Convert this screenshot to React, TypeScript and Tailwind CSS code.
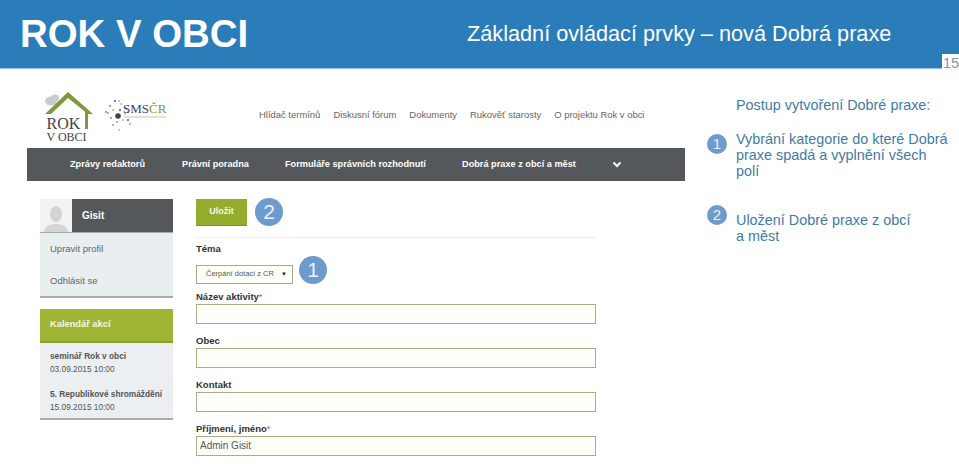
import React from "react";

const ar = "font-['Liberation_Sans',Arial,sans-serif]";

function Badge({ n, className = "" }: { n: string; className?: string }) {
  return (
    <span className={`flex items-center justify-center rounded-full bg-[#6e9bcd] text-[#eaf1f8] shrink-0 ${className}`}>
      {n}
    </span>
  );
}

function Field({ label, req, value, mt }: { label: string; req?: boolean; value?: string; mt: string }) {
  return (
    <div className={mt}>
      <div className="h-[14px] text-[9.5px] leading-[14px] font-bold text-[#333]">
        {label}
        {req && <span className="text-[#b85c5c] font-normal">*</span>}
      </div>
      <div className="h-[20px] w-[400px] border border-[#a9ae85] bg-[#fffff9] pl-[3px] text-[10px] leading-[18px] text-[#555]">
        {value}
      </div>
    </div>
  );
}

function RokLogo() {
  return (
    <svg width="52" height="56" viewBox="0 0 52 56" className="shrink-0">
      <ellipse cx="7" cy="11" rx="6" ry="4.5" fill="#c9cbcc" />
      <ellipse cx="11" cy="8" rx="4" ry="3.5" fill="#c9cbcc" />
      <path d="M1 24 L24 2 L49 24 L44 24 L24 8 L7 24 Z" fill="#7c9a3a" />
      <rect x="41" y="20" width="3" height="19" fill="#7c9a3a" />
      <text x="2.5" y="39" fontFamily="Liberation Serif, serif" fontSize="16" fill="#444">ROK</text>
      <text x="2.5" y="51" fontFamily="Liberation Serif, serif" fontSize="12" fill="#444">V OBCI</text>
    </svg>
  );
}

function SmsLogo() {
  const dots = [
    [10, 3], [16, 6], [20, 10], [5, 8], [3, 15], [8, 12], [15, 12], [20, 16], [23, 14], [6, 20], [12, 24], [18, 22], [23, 22], [14, 32], [8, 27], [1, 14], [25, 26], [14, 3],
  ];
  return (
    <svg width="66" height="36" viewBox="0 0 66 36" className="shrink-0">
      {dots.map(([x, y], i) => (
        <circle key={i} cx={x} cy={y} r={i % 3 === 0 ? 1 : 0.8} fill={i % 2 ? "#7f9a3c" : "#555"} />
      ))}
      <circle cx="13" cy="18" r="2.8" fill="#444" />
      <text x="18" y="15" fontFamily="Liberation Serif, serif" fontSize="13" fill="#3c3f78">
        SMS<tspan fill="#7c9a3a">ČR</tspan>
      </text>
      <rect x="19" y="18.5" width="42" height="1" fill="#c6c9a0" />
    </svg>
  );
}

export default function App() {
  return (
    <div className={`relative flex h-[464px] w-[959px] flex-col overflow-hidden bg-white ${ar}`}>
      <header className="flex h-[68px] shrink-0 items-center bg-[#2a7db8] shadow-[0_1px_1px_#9fc3dd]">
        <div className="ml-[20px] w-[447px] text-[38.4px] font-bold leading-none text-white">ROK V OBCI</div>
        <div className="text-[21.7px] leading-none text-white">Základní ovládací prvky – nová Dobrá praxe</div>
      </header>
      <div className="absolute right-0 top-[54px] h-[15px] w-[17px] bg-white pl-[1px] text-[14.5px] leading-[19px] text-[#7c97ab]">15</div>

      <div className="flex min-h-0 flex-1">
        <div className="ml-[27px] w-[658px] shrink-0">
          <div className="flex h-[80px] items-start">
            <div className="ml-[17px] mt-[22px]"><RokLogo /></div>
            <div className="ml-[9px] mt-[30px]"><SmsLogo /></div>
            <nav className="ml-[88px] mt-[40px] flex gap-[13px] text-[9.45px] leading-[14px] text-[#666]">
              <span>Hlídač termínů</span>
              <span>Diskusní fórum</span>
              <span>Dokumenty</span>
              <span>Rukověť starosty</span>
              <span>O projektu Rok v obci</span>
            </nav>
          </div>
          <div className="flex h-[33px] items-center bg-[#54585a] pl-[43px] text-[9.2px] font-bold text-white">
            <span className="w-[112px]">Zprávy redaktorů</span>
            <span className="w-[103px]">Právní poradna</span>
            <span className="w-[177px]">Formuláře správních rozhodnutí</span>
            <span className="w-[150px]">Dobrá praxe z obcí a měst</span>
            <svg width="10" height="7" viewBox="0 0 10 7"><path d="M1.5 1.5 L5 5 L8.5 1.5" fill="none" stroke="#fff" strokeWidth="2" /></svg>
          </div>

          <div className="flex">
            <aside className="ml-[13px] mt-[18px] w-[133px] shrink-0">
              <div className="flex h-[34px] border-b border-[#aaa] bg-[#eef0f0]">
                <div className="flex w-[32px] items-end justify-center overflow-hidden bg-[#f3f3f3]">
                  <svg width="26" height="28" viewBox="0 0 26 28"><ellipse cx="13" cy="10" rx="6" ry="8" fill="#d4d4d4" /><path d="M1 28 C2 21 8 20 13 20 C18 20 24 21 25 28 Z" fill="#d4d4d4" /></svg>
                </div>
                <div className="flex flex-1 items-center bg-[#54585a] pl-[10px] text-[10px] font-bold text-white">Gisit</div>
              </div>
              <div className="flex h-[65px] flex-col border-b-2 border-[#aaa] bg-[#e9eef0] pl-[10px] text-[9.5px] text-[#666]">
                <span className="mt-[9px] leading-[14px]">Upravit profil</span>
                <span className="mt-[18px] leading-[14px]">Odhlásit se</span>
              </div>
              <div className="mt-[11px] flex h-[34px] items-center border-b-2 border-[#87a02f] bg-[#a0b535] pl-[10px] text-[9.3px] font-bold text-[#f4f7e2]">Kalendář akcí</div>
              <div className="h-[77px] border-b-2 border-[#aaa] bg-[#eceff1] pl-[10px] pt-[7px] text-[8.3px] leading-[13px] text-[#555]">
                <div className="font-bold">seminář Rok v obci</div>
                <div>03.09.2015 10:00</div>
                <div className="mt-[12px] font-bold">5. Republikové shromáždění</div>
                <div>15.09.2015 10:00</div>
              </div>
            </aside>

            <main className="ml-[23px] mt-[18px] w-[400px] shrink-0">
              <div className="flex items-center gap-[8px] border-b border-[#eee] pb-[11px]">
                <div className="flex h-[27px] w-[51px] items-center justify-center border-b border-[#7b8f2c] bg-[#95ad2f] text-[9px] font-bold text-[#f4f7e2]">Uložit</div>
                <Badge n="2" className="-mt-[2px] h-[28px] w-[28px] text-[21px]" />
              </div>
              <div className="mt-[4px] h-[14px] text-[9.5px] font-bold leading-[14px] text-[#333]">Téma</div>
              <div className="mt-[8px] flex items-center gap-[3px]">
                <div className="flex h-[19px] w-[97px] items-center justify-between border border-[#a9a88a] bg-[#fffff8] pl-[9px] pr-[5px] text-[7.5px] text-[#555]">
                  <span>Čerpání dotací z CR</span>
                  <span className="text-[6px] text-[#222]">▼</span>
                </div>
                <Badge n="1" className="-mt-[8px] ml-[3px] h-[28px] w-[28px] text-[21px]" />
              </div>
              <Field label="Název aktivity" req mt="mt-[6px]" />
              <Field label="Obec" mt="mt-[10px]" />
              <Field label="Kontakt" mt="mt-[10px]" />
              <Field label="Příjmení, jméno" req value="Admin Gisit" mt="mt-[10px]" />
            </main>
          </div>
        </div>

        <section className="ml-[22px] flex-1 text-[#3f7ba6]">
          <div className="ml-[29px] mt-[29px] text-[14.4px] leading-[16px]">Postup vytvoření Dobré praxe:</div>
          <div className="mt-[18px] flex items-start">
            <Badge n="1" className="mt-[3px] h-[20px] w-[20px] text-[15px]" />
            <div className="ml-[9px] w-[216px] text-[14.4px] leading-[16px]">Vybrání kategorie do které Dobrá praxe spadá a vyplnění všech polí</div>
          </div>
          <div className="mt-[26px] flex items-start">
            <Badge n="2" className="h-[20px] w-[20px] text-[15px]" />
            <div className="ml-[9px] mt-[7px] w-[180px] text-[14.4px] leading-[16px]">Uložení Dobré praxe z obcí a měst</div>
          </div>
        </section>
      </div>
    </div>
  );
}
